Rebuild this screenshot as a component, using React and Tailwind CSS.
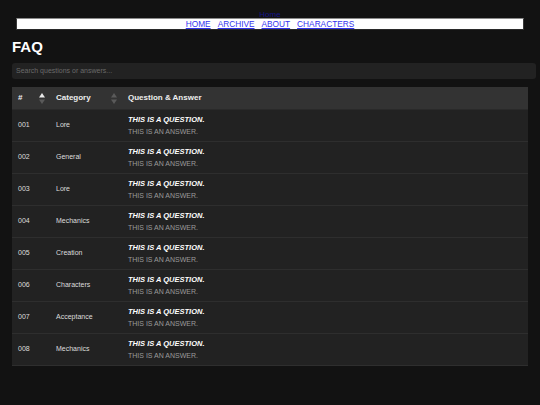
import React from "react";

const rows = [
  ["001", "Lore"],
  ["002", "General"],
  ["003", "Lore"],
  ["004", "Mechanics"],
  ["005", "Creation"],
  ["006", "Characters"],
  ["007", "Acceptance"],
  ["008", "Mechanics"],
];

function SortIcon({ active }) {
  return (
    <svg width="6" height="11" viewBox="0 0 6 11" className="block">
      <polygon points="3,0 6,4.5 0,4.5" fill={active ? "#e8e8e8" : "#5a5a5a"} />
      <polygon points="0,6.5 6,6.5 3,11" fill="#5a5a5a" />
    </svg>
  );
}

export default function App() {
  return (
    <div
      className="w-[540px] h-[405px] bg-[#121212] overflow-hidden"
      style={{ fontFamily: '"Liberation Sans", Arial, sans-serif' }}
    >
      <div className="h-[18px] pt-[11px] flex justify-center">
        <a href="#" className="text-[8px] leading-[7px] text-[#14148a]">Home</a>
      </div>
      <nav className="mx-[16px] h-[12px] bg-white border-t border-t-[#8a8a8a] border-b border-b-[#2a2a2a] border-x border-x-[#3a3a3a] flex justify-center items-center gap-[7px] text-[8.3px] leading-[9px]">
        <a href="#" className="text-[#3333ee] underline">HOME</a>
        <a href="#" className="text-[#3333ee] underline">ARCHIVE</a>
        <a href="#" className="text-[#3333ee] underline">ABOUT</a>
        <a href="#" className="text-[#3333ee] underline">CHARACTERS</a>
      </nav>
      <div className="px-[12px]">
        <h1 className="mt-[9px] text-[15px] leading-[16px] font-bold text-white">FAQ</h1>
        <div className="mt-[8px] w-[524px] h-[16px] rounded-[3px] bg-[#222222] flex items-center px-[4px]">
          <span className="text-[7px] text-[#6a6a6a]">Search questions or answers...</span>
        </div>
        <div className="mt-[8px] w-[516px]">
          <div className="h-[23px] bg-[#333333] border-b border-[#2a2a2a] flex items-center text-[8px] font-bold text-[#eeeeee]">
            <div className="w-[38px] pl-[6px] flex items-center justify-between pr-[5px]">
              <span>#</span>
              <SortIcon active />
            </div>
            <div className="w-[72px] pl-[6px] flex items-center justify-between pr-[5px]">
              <span>Category</span>
              <SortIcon />
            </div>
            <div className="pl-[6px]">Question &amp; Answer</div>
          </div>
          {rows.map(([n, c]) => (
            <div key={n} className="h-[32px] bg-[#222222] border-b border-[#2e2e2e] flex items-center text-[7px] text-[#dddddd]">
              <div className="w-[38px] pl-[6px]">{n}</div>
              <div className="w-[72px] pl-[6px]">{c}</div>
              <div className="pl-[6px] flex flex-col">
                <span className="text-[7.5px] leading-[10px] font-bold italic text-white">THIS IS A QUESTION.</span>
                <span className="text-[7px] leading-[10px] text-[#9a9a9a] mt-[2px]">THIS IS AN ANSWER.</span>
              </div>
            </div>
          ))}
        </div>
      </div>
    </div>
  );
}
